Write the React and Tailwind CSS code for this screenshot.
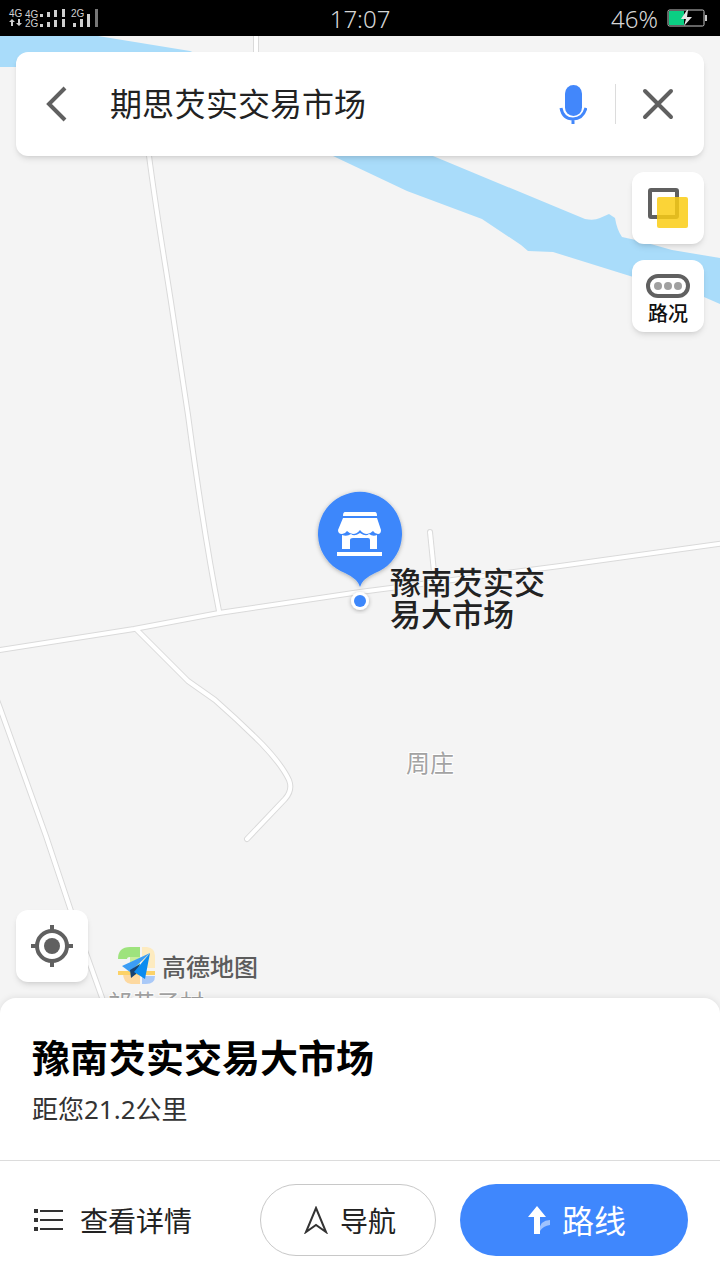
import { useState } from "react";

const water = "#a9dcfa";

const roads = [
  "M256 30 V60",
  "M147 140 C155 205 163 250 171 302 L188 415 Q204 535 219 611",
  "M-6 651 L134 629 L219 613 L360 592 L560 566 L726 543",
  "M435 582 L430 532",
  "M137 630 L188 681 L215 700 Q240 722 262 744 Q282 765 289 780 Q293 790 285 799 L247 839",
  "M-6 692 L0 708 Q22 770 46 836 L72 914 L105 1006",
];

function StatusBar() {
  return (
    <header className="flex h-9 shrink-0 items-center justify-between bg-black px-2 text-[#d6d6d6]">
      <div className="flex flex-1 items-center">
        <svg width="92" height="24" viewBox="0 0 92 24" fill="#d0d0d0" aria-label="信号">
          <g fontFamily="Liberation Sans, sans-serif" fontSize="10">
            <text x="1" y="11">4G</text>
            <text x="17" y="12">4G</text>
            <text x="17" y="21">2G</text>
            <text x="63" y="11">2G</text>
          </g>
          <path d="M4 13l3 3H5v4H3v-4H1zM11 20l3-3h-2v-4h-2v4H8z" />
          <path d="M32 8h3v3h-3zM39 6h3v5h-3zM46 4h3v7h-3zM54 3h3v8h-3z" />
          <path d="M32 18h3v3h-3zM39 16h3v5h-3zM46 14h3v7h-3zM54 13h3v8h-3z" />
          <path d="M65 17h3v4h-3zM72 13h3v8h-3zM79 8h3v13h-3z" />
          <path d="M87 3h3v18h-3z" fill="#777" />
        </svg>
      </div>
      <time className="pt-0.5 pl-1 text-2xl font-light">17:07</time>
      <div className="flex flex-1 items-center justify-end gap-2 pr-1">
        <span className="pt-0.5 text-2xl font-light">46%</span>
        <svg width="42" height="18" viewBox="0 0 42 18" fill="none" aria-label="充电中">
          <rect x="2" y="1" width="36" height="16" rx="1.5" stroke="#c9c9c9" />
          <path d="M3 2h15v14H3z" fill="#0bcf83" />
          <path d="M21 1l-6 9h5l-2 7 8-9h-5l1-7z" fill="#e4e4e4" />
          <path d="M39 6h2v6h-2z" fill="#c9c9c9" />
        </svg>
      </div>
    </header>
  );
}

function MapCanvas() {
  return (
    <svg
      className="absolute inset-0 h-full w-full"
      viewBox="0 36 720 978"
      preserveAspectRatio="xMidYMid slice"
    >
      <defs>
        <filter id="pinShadow" x="-20%" y="-20%" width="140%" height="140%">
          <feDropShadow dx="0" dy="1" stdDeviation="2" floodOpacity="0.3" />
        </filter>
      </defs>
      <rect y="36" width="720" height="978" fill="#f4f4f4" />

      {/* River */}
      <path
        d="M0 36H98L190 51L433 156L585 219Q594 221 600 218L609 214L615 218Q617 230 622 237L640 241L672 250L720 258V304L704 297L630 276L553 252L528 251L521 245L482 219L407 191L333 156L120 67H0Z"
        fill={water}
      />

      {/* Roads: outline first, then the white surface */}
      <g fill="none" strokeLinecap="round" strokeLinejoin="round">
        {roads.map((d) => (
          <path key={d} d={d} stroke="#dadada" strokeWidth="6" />
        ))}
        {roads.map((d) => (
          <path key={d} d={d} stroke="#fff" strokeWidth="4" />
        ))}
      </g>

      {/* Place names */}
      <g stroke="#fff" strokeLinejoin="round" paintOrder="stroke">
        <text x="406" y="772" fontSize="24" fill="#a3a3a3" strokeWidth="2">周庄</text>
        <text x="108" y="1012" fontSize="24" fill="#a3a3a3" strokeWidth="2">祁黄子村</text>
        <text fontSize="31" fontWeight="500" fill="#222" stroke="#f4f4f4" strokeWidth="2">
          <tspan x="390" y="594">豫南芡实交</tspan>
          <tspan x="390" y="626">易大市场</tspan>
        </text>
      </g>

      {/* Selected place */}
      <circle cx="360" cy="601" r="9" fill="#fff" filter="url(#pinShadow)" />
      <circle cx="360" cy="601" r="6" fill="#3d87fb" />
      <path
        d="M360 587Q358 579 345 573A42 42 0 1 1 375 573Q362 579 360 587Z"
        fill="#3d87fb"
        filter="url(#pinShadow)"
      />
      <g fill="#fff">
        <path d="M345 512h30q2 0 2 4h-34q0-4 2-4z" />
        <path d="M343 518h34l4 12q0 4-3 4q-3 0-5-3q-3 3-6 3q-4 0-7-4q-3 4-7 4q-3 0-6-3q-2 3-5 3q-4 0-4-4z" />
        <path d="M342 535q5 2 9-1q3 3 9-1q6 4 9 1q4 3 8 1v14h-7v-9q0-2-2-2h-15q-3 0-3 2v9h-8z" />
        <path d="M337 552h45v4h-45z" />
      </g>
    </svg>
  );
}

function SearchBar() {
  const [query, setQuery] = useState("期思芡实交易市场");

  return (
    <form
      onSubmit={(e) => e.preventDefault()}
      className="flex h-26 items-center rounded-xl bg-white shadow-md"
    >
      <button type="button" aria-label="返回" className="flex h-full w-20 items-center justify-center">
        <svg width="24" height="36" viewBox="0 0 24 36" fill="none" stroke="#606060" strokeWidth="4">
          <path d="M21 2L5 18l16 16" />
        </svg>
      </button>
      <input
        type="text"
        aria-label="搜索"
        value={query}
        onChange={(e) => setQuery(e.target.value)}
        className="ml-3.5 min-w-0 flex-1 bg-transparent text-[32px] text-[#222] outline-none"
      />
      <button type="button" aria-label="语音" className="flex h-full w-21 items-center justify-center">
        <svg width="28" height="40" viewBox="0 0 28 40" fill="none">
          <rect x="6" y="1" width="17" height="31" rx="8.5" fill="#4287fb" />
          <path d="M2 24Q4 35 14 35T27 24M14 35v5" stroke="#4287fb" strokeWidth="3" />
        </svg>
      </button>
      <span className="h-10 w-px bg-[#dcdcdc]" />
      <button
        type="button"
        aria-label="清除"
        onClick={() => setQuery("")}
        className="flex h-full w-22 items-center justify-center pr-1"
      >
        <svg width="32" height="32" viewBox="0 0 32 32" stroke="#606060" strokeWidth="4" strokeLinecap="round">
          <path d="M3 3l26 26M29 3L3 29" />
        </svg>
      </button>
    </form>
  );
}

function MapButton({ label, children }) {
  return (
    <button
      type="button"
      aria-label={label}
      className="flex size-18 flex-col items-center justify-center rounded-xl bg-white shadow-md"
    >
      {children}
    </button>
  );
}

function Brand() {
  return (
    <div className="flex items-center gap-1">
      <svg width="42" height="40" viewBox="0 0 42 40">
        <path d="M24 1v10H14q-3 0-3 2H2q0-12 12-12z" fill="#9ee37d" />
        <path d="M14 11h10v10H14z" fill="#c9ee9c" />
        <path d="M26 1h5q8 1 8 9v12H26z" fill="#fdebc0" />
        <path d="M7 27h17v11h-9q-8-1-8-11z" fill="#fdd9a0" />
        <path d="M2 25h37v4H2z" fill="#fcd267" />
        <path d="M26 30h13q0 8-9 8h-4z" fill="#a9c9f8" />
        <path d="M34 7L6 20l8 6z" fill="#3b9df5" />
        <path d="M14 24l1 8 5-4 4-10z" fill="#17416f" />
        <path d="M34 7L18 26l11 7z" fill="#0c8cf0" />
      </svg>
      <span className="pt-0.5 text-2xl font-medium text-[#5c5c5c]">高德地图</span>
    </div>
  );
}

function PlaceSheet() {
  return (
    <section className="relative -mt-4 shrink-0 rounded-t-2xl bg-white shadow-[0_-1px_6px_rgba(0,0,0,0.08)]">
      <div className="flex flex-col gap-3 px-8 pt-[35px] pb-[35px]">
        <h1 className="text-[38px] leading-12 font-bold text-black">豫南芡实交易大市场</h1>
        <p className="text-[26px] leading-8 text-[#333]">距您21.2公里</p>
      </div>
      <div className="flex items-center gap-6 border-t border-[#dcdcdc] px-8 pt-[23px] pb-6">
        <button type="button" className="flex flex-1 items-center gap-4 text-[28px] text-[#222]">
          <svg width="32" height="24" viewBox="0 0 32 24" fill="#333">
            <path d="M2 1h4v4H2zM2 10h4v4H2zM2 19h4v4H2zM8 2h23v2H8zM8 11h23v2H8zM8 20h23v2H8z" />
          </svg>
          <span className="pt-0.5">查看详情</span>
        </button>
        <button
          type="button"
          className="flex h-18 w-44 items-center justify-center gap-3 rounded-full border border-[#c8c8c8] pl-1 text-[28px] text-[#222]"
        >
          <svg width="24" height="28" viewBox="0 0 24 28" fill="none" stroke="#333" strokeWidth="2">
            <path d="M12 2L22 26L12 19L2 26Z" />
          </svg>
          <span className="pt-0.5">导航</span>
        </button>
        <button
          type="button"
          className="flex h-18 w-57 items-center justify-center gap-3 rounded-full bg-[#3f87fd] pl-1 text-[32px] text-white"
        >
          <svg width="24" height="30" viewBox="0 0 24 30" fill="#fff">
            <path d="M13 26Q14 15 24 15v5Q17 21 14 26z" opacity="0.5" />
            <path d="M11 1l9 11h-6v17H8V12H2z" />
          </svg>
          <span className="pt-0.5">路线</span>
        </button>
      </div>
    </section>
  );
}

export default function App() {
  return (
    <div className="flex min-h-screen flex-col bg-white font-['Noto_Sans','Noto_Sans_CJK_SC',sans-serif]">
      <StatusBar />
      <main className="relative flex flex-1 flex-col justify-between overflow-hidden">
        <MapCanvas />

        <div className="relative flex flex-col gap-4 p-4">
          <SearchBar />
          <div className="flex flex-col items-end gap-4">
            <MapButton label="图层">
              <svg width="42" height="42" viewBox="0 0 42 42">
                <rect x="3" y="3" width="27" height="27" rx="1" fill="none" stroke="#606060" strokeWidth="4" />
                <rect x="10" y="10" width="31" height="31" rx="2" fill="#facd14" opacity="0.85" />
              </svg>
            </MapButton>
            <MapButton label="路况">
              <svg className="mt-2" width="44" height="24" viewBox="0 0 44 24">
                <rect x="2" y="2" width="40" height="20" rx="10" fill="none" stroke="#606060" strokeWidth="4" />
                <g fill="#a0a0a0">
                  <circle cx="12" cy="12" r="4" />
                  <circle cx="22" cy="12" r="4" />
                  <circle cx="32" cy="12" r="4" />
                </g>
              </svg>
              <span className="pt-1 text-xl leading-6 font-medium text-[#111]">路况</span>
            </MapButton>
          </div>
        </div>

        <div className="relative flex items-end gap-7 px-4 pb-7">
          <div className="mb-1">
            <MapButton label="定位">
              <svg width="42" height="42" viewBox="0 0 42 42" fill="none" stroke="#606060" strokeWidth="4">
                <circle cx="21" cy="21" r="15" />
                <circle cx="21" cy="21" r="8" fill="#606060" stroke="none" />
                <path d="M21 0v6M21 36v6M0 21h6M36 21h6" />
              </svg>
            </MapButton>
          </div>
          <Brand />
        </div>
      </main>
      <PlaceSheet />
    </div>
  );
}
